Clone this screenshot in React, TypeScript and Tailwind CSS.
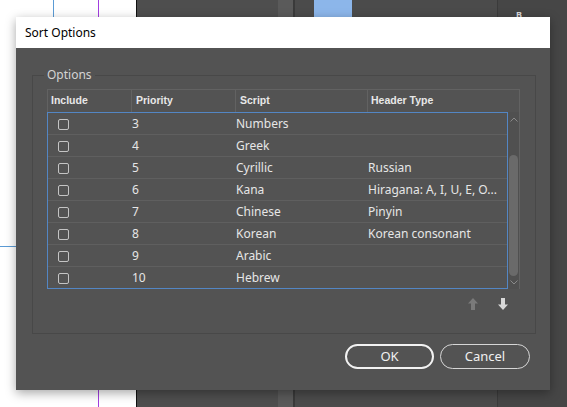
const rows = [
  { priority: 3, script: "Numbers", header: "" },
  { priority: 4, script: "Greek", header: "" },
  { priority: 5, script: "Cyrillic", header: "Russian" },
  { priority: 6, script: "Kana", header: "Hiragana: A, I, U, E, O..." },
  { priority: 7, script: "Chinese", header: "Pinyin" },
  { priority: 8, script: "Korean", header: "Korean consonant" },
  { priority: 9, script: "Arabic", header: "" },
  { priority: 10, script: "Hebrew", header: "" },
];

function BlockArrow({ dir, color }: { dir: "up" | "down"; color: string }) {
  const d =
    dir === "up"
      ? "M5 0L10 5.5H7V12H3V5.5H0Z"
      : "M5 12L10 6.5H7V0H3V6.5H0Z";
  return (
    <svg width="10" height="12" viewBox="0 0 10 12">
      <path d={d} fill={color} />
    </svg>
  );
}

function Chevron({ dir }: { dir: "up" | "down" }) {
  const d = dir === "up" ? "M0.5 4.5L4 1L7.5 4.5" : "M0.5 0.5L4 4L7.5 0.5";
  return (
    <svg width="8" height="5" viewBox="0 0 8 5">
      <path d={d} stroke="#8a8a8a" strokeWidth="1" fill="none" />
    </svg>
  );
}

function Background() {
  return (
    <div className="flex h-[407px] w-[567px]">
      <div className="relative h-full w-[136px] bg-white">
        <div className="absolute left-[53px] top-0 h-[247px] w-px bg-[#5b9bd5]" />
        <div className="absolute left-0 top-[246px] h-px w-[54px] bg-[#5b9bd5]" />
        <div className="absolute left-[98px] top-0 h-full w-px bg-[#a23ee0]" />
      </div>
      <div className="h-full w-[1px] bg-[#111111]" />
      <div className="h-full w-[141px] bg-[#4e4e4e]" />
      <div className="h-full w-[15px] bg-[#5a5a5a]" />
      <div className="h-full w-[2px] bg-[#3a3a3a]" />
      <div className="h-full w-[19px] bg-[#4b4b4b]" />
      <div className="flex h-full w-[38px] flex-col bg-[#4b4b4b]">
        <div className="h-[40px] bg-[#8cb6ea]" />
      </div>
      <div className="h-full w-[145px] bg-[#4b4b4b]" />
      <div className="h-full w-px bg-[#3b3b3b]" />
      <div className="h-full flex-1 bg-[#464646] pl-[18px] pt-[10px] text-[9px] font-bold leading-none text-[#d8d8d8]">
        B
      </div>
    </div>
  );
}

export default function App() {
  return (
    <div className="relative h-[407px] w-[567px] overflow-hidden font-['Noto_Sans',sans-serif]">
      <Background />

      <div className="absolute left-[16px] top-[17px] flex h-[373px] w-[534px] flex-col bg-[#535353] shadow-[0_3px_10px_rgba(0,0,0,0.35)]">
        <div className="flex h-[31px] items-center bg-white pl-[9px] pt-[1px] text-[12px] text-black">
          Sort Options
        </div>

        <div className="flex flex-1 flex-col pl-[16px] pr-[14px] pt-[27px]">
          <div className="relative h-[259px] w-[504px] border border-[#484848] pl-[14px] pt-[13px]">
            <span className="absolute -top-[9px] left-[11px] bg-[#535353] px-[3px] text-[12px] leading-[16px] text-[#d4d4d4]">
              Options
            </span>

            <div className="w-[473px]">
              <div className="flex h-[23px] border-l border-t border-[#626262] font-['Liberation_Sans',sans-serif] text-[10.5px] font-bold text-[#e8e8e8]">
                <div className="flex w-[84px] items-center border-r border-[#626262] pl-[3px]">Include</div>
                <div className="flex w-[104px] items-center border-r border-[#626262] pl-[4px]">Priority</div>
                <div className="flex w-[132px] items-center border-r border-[#626262] pl-[4px]">Script</div>
                <div className="flex w-[152px] items-center border-r border-[#626262] pl-[3px]">Header Type</div>
              </div>

              <div className="flex">
                <div className="w-[461px] border border-[#5386c4] text-[12px] text-[#e6e6e6]">
                  {rows.map((row, i) => (
                    <div
                      key={row.priority}
                      className={`flex items-center pt-[1px] ${
                        i < rows.length - 1 ? "h-[22px] border-b border-[#5f5f5f]" : "h-[21px]"
                      }`}
                    >
                      <div className="flex w-[84px] items-center pl-[10px]">
                        <span className="block size-[11px] rounded-[2px] border border-[#c4c4c4]" />
                      </div>
                      <div className="w-[104px]">{row.priority}</div>
                      <div className="w-[132px]">{row.script}</div>
                      <div className="min-w-0 flex-1 whitespace-nowrap">{row.header}</div>
                    </div>
                  ))}
                </div>

                <div className="flex w-[12px] flex-col items-center border-r border-[#626262] bg-[#505050]">
                  <div className="flex h-[13px] items-center justify-center pt-[2px]">
                    <Chevron dir="up" />
                  </div>
                  <div className="mt-[30px] h-[121px] w-[9px] rounded-full bg-[#6a6a6a]" />
                  <div className="flex flex-1 items-center justify-center">
                    <Chevron dir="down" />
                  </div>
                </div>
              </div>

              <div className="mt-[9px] flex justify-end gap-[20px] pr-[12px]">
                <BlockArrow dir="up" color="#7a7a7a" />
                <BlockArrow dir="down" color="#d8d8d8" />
              </div>
            </div>
          </div>

          <div className="mt-[10px] flex justify-end gap-[6px] pr-[6px] text-[13px] text-[#f0f0f0]">
            <button
              type="button"
              className="flex h-[25px] w-[89px] items-center justify-center rounded-full border-2 border-[#f2f2f2]"
            >
              OK
            </button>
            <button
              type="button"
              className="flex h-[25px] w-[90px] items-center justify-center rounded-full border border-[#d6d6d6]"
            >
              Cancel
            </button>
          </div>
        </div>
      </div>
    </div>
  );
}
